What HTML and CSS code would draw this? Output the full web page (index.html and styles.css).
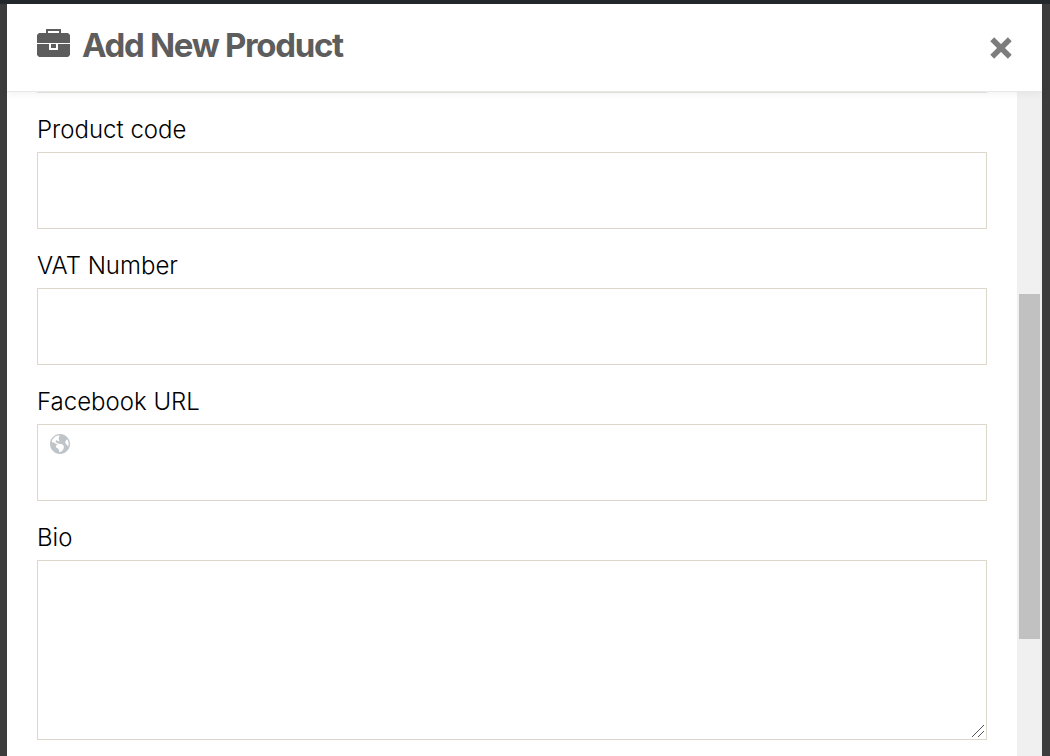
FILE: index.html
```html
<!DOCTYPE html>
<html lang="en">
  <head>
    <meta charset="utf-8" />
    <title>Add New Product</title>
    <link rel="stylesheet" href="styles.css" />
  </head>
  <body>
    <div class="modal">
      <div class="modal-header">
        <h2>
          <svg class="icon-briefcase" viewBox="0 0 33 28" aria-hidden="true">
            <path d="M9 5V0h15v5h-2V2H11v3z" />
            <path d="M2 4h29l2 2v8H0V6z" />
            <path d="M0 15h12v6h9v-6h12v11l-2 2H2l-2-2z" />
            <path d="M14 15h5v4h-5z" />
          </svg>
          Add New Product
        </h2>
        <button type="button" class="close" aria-label="Close">
          <svg viewBox="0 0 20 20" aria-hidden="true">
            <path d="M2 2L18 18M18 2L2 18" />
          </svg>
        </button>
      </div>
      <div class="modal-body">
        <form class="fields">
          <div class="field">
            <label for="code">Product code</label>
            <input type="text" id="code" />
          </div>
          <div class="field">
            <label for="vat">VAT Number</label>
            <input type="text" id="vat" />
          </div>
          <div class="field">
            <label for="facebook">Facebook URL</label>
            <div class="control">
              <svg class="icon-globe" viewBox="0 0 18 18" aria-hidden="true">
                <path
                  d="M9 0C4.03 0 0 4.03 0 9s4.03 9 9 9 9-4.03 9-9-4.03-9-9-9zm3.46 11.95c0 1.47-.8 3.3-4.06 4.7.3-4.17-2.52-3.69-3.2-5 .126-1.1.804-2.063 1.8-2.55-1.552-.266-3-.96-4.18-2 .05.47.28.904.64 1.21-.782-.295-1.458-.817-1.94-1.5.977-3.225 3.883-5.482 7.25-5.63-.84 1.38-1.5 4.13 0 5.57C7.23 7 6.26 5 5.41 5.79c-1.13 1.06.33 2.51 3.42 3.08 3.29.59 3.66 1.58 3.63 3.08zm1.34-4c-.32-1.11.62-2.23 1.69-3.14 1.356 1.955 1.67 4.45.84 6.68-.77-1.89-2.17-2.32-2.53-3.57z"
                />
              </svg>
              <input type="url" id="facebook" class="has-icon" />
            </div>
          </div>
          <div class="field">
            <label for="bio">Bio</label>
            <div class="control">
              <textarea id="bio"></textarea>
              <svg class="grip" viewBox="0 0 12 12" aria-hidden="true">
                <path d="M0 12L12 0M6 12L12 6" />
              </svg>
            </div>
          </div>
        </form>
        <div class="scrollbar">
          <div class="thumb"></div>
        </div>
      </div>
    </div>
  </body>
</html>
```
FILE: styles.css
```css
* {
  box-sizing: border-box;
}
body {
  display: flex;
  height: 100vh;
  margin: 0;
  padding: 0 8px 0 7px;
  overflow: hidden;
  border-top: 4px solid #23282d;
  background: #3c3c3c;
  font-family: Inter, "Liberation Sans", sans-serif;
}
.modal {
  display: flex;
  flex: 1;
  flex-direction: column;
  background: #fff;
}

/* title bar */
.modal-header {
  display: flex;
  z-index: 1;
  align-items: center;
  justify-content: space-between;
  height: 88px;
  padding: 0 30px;
  border-bottom: 1px solid #e8e8e8;
  background: #fff;
  box-shadow: 0 2px 8px rgba(0, 0, 0, 0.05);
}
.modal-header h2 {
  display: flex;
  align-items: center;
  gap: 12px;
  margin: 0 0 5px;
  color: #5d5d5d;
  font-size: 33px;
  font-weight: 700;
  line-height: 40px;
  letter-spacing: -0.04em;
}
.icon-briefcase {
  width: 33px;
  height: 28px;
  margin-bottom: 4px;
  fill: #5d5d5d;
}
.close {
  display: flex;
  padding: 0;
  border: 0;
  background: none;
  cursor: pointer;
}
.close svg {
  width: 22px;
  height: 22px;
  fill: none;
  stroke: #7d7d7d;
  stroke-width: 5;
}

/* form */
.modal-body {
  display: flex;
  flex: 1;
  min-height: 0;
}
.fields {
  flex: 1;
  margin: 0 30px;
  border-top: 1px solid #e8e6e0;
}
.field {
  margin: 21px 0;
}
.field label {
  display: block;
  margin-bottom: 6px;
  color: #000;
  font-size: 24px;
  font-weight: 300;
  line-height: 32px;
}
.control {
  position: relative;
}
input,
textarea {
  display: block;
  width: 100%;
  height: 77px;
  padding: 8px 12px;
  border: 1px solid #dcd7ca;
  border-radius: 0;
  outline: 0;
  background: #fff;
  font: inherit;
  font-size: 24px;
}
.has-icon {
  padding-left: 40px;
}
textarea {
  height: 180px;
  resize: none;
}
.icon-globe {
  position: absolute;
  top: 10px;
  left: 13px;
  width: 20px;
  height: 20px;
  fill: #bfc4c8;
}
.grip {
  position: absolute;
  right: 3px;
  bottom: 3px;
  width: 12px;
  height: 12px;
  fill: none;
  stroke: #555;
}

/* scroll track */
.scrollbar {
  display: flex;
  flex-direction: column;
  width: 25px;
  padding: 0 2px;
  background: #f0f0f0;
}
.scrollbar::before {
  flex: 202;
  content: "";
}
.scrollbar::after {
  flex: 117;
  content: "";
}
.thumb {
  flex: 345;
  background: #c1c1c1;
}
```
